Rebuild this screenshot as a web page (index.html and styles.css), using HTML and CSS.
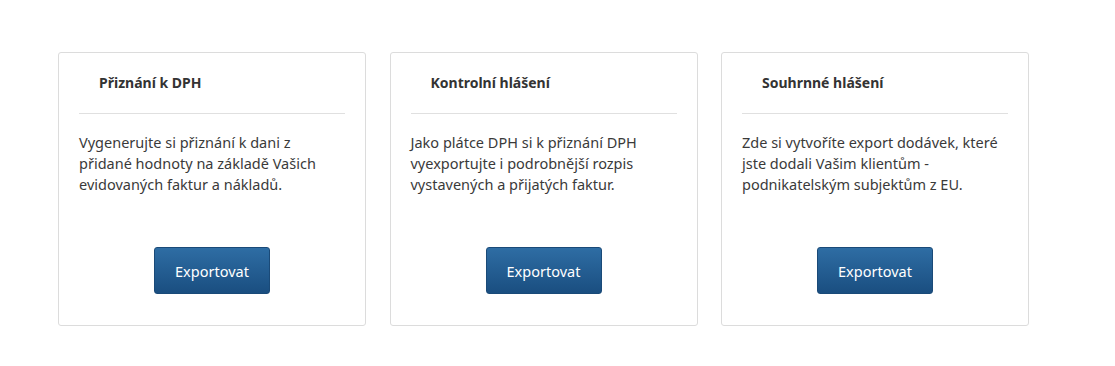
FILE: index.html
```html
<!DOCTYPE html>
<html lang="cs">
<head>
    <meta charset="UTF-8">
    <meta name="viewport" content="width=device-width, initial-scale=1.0">
    <title>Exporty DPH</title>
    <link rel="stylesheet" href="styles.css">
</head>
<body>
    <div class="container">
        <div class="card">
            <h2 class="card-title">Přiznání k DPH</h2>
            <p class="card-text">Vygenerujte si přiznání k dani z přidané hodnoty na základě Vašich evidovaných faktur a nákladů.</p>
            <div class="card-actions">
                <button class="btn">Exportovat</button>
            </div>
        </div>

        <div class="card">
            <h2 class="card-title">Kontrolní hlášení</h2>
            <p class="card-text">Jako plátce DPH si k přiznání DPH vyexportujte i podrobnější rozpis vystavených a přijatých faktur.</p>
            <div class="card-actions">
                <button class="btn">Exportovat</button>
            </div>
        </div>

        <div class="card">
            <h2 class="card-title">Souhrnné hlášení</h2>
            <p class="card-text">Zde si vytvoříte export dodávek, které jste dodali Vašim klientům - podnikatelským subjektům z EU.</p>
            <div class="card-actions">
                <button class="btn">Exportovat</button>
            </div>
        </div>
    </div>
</body>
</html>
```

FILE: styles.css
```css
* {
    margin: 0;
    padding: 0;
    box-sizing: border-box;
}

body {
    font-family: 'Noto Sans', 'Open Sans', sans-serif;
    background: #fff;
    color: #333;
}

.container {
    display: flex;
    gap: 23.5px;
    padding: 52px 0 0 58px;
}

.card {
    width: 308px;
    height: 274px;
    border: 1px solid #dcdcdc;
    border-radius: 3px;
    padding: 0 20px;
    display: flex;
    flex-direction: column;
}

.card-title {
    font-size: 14px;
    font-weight: bold;
    color: #333;
    padding: 20px 0 0 20px;
    height: 61px;
    border-bottom: 1px solid #e0e0e0;
}

.card-text {
    font-size: 14.5px;
    line-height: 21px;
    color: #3a3a3a;
    margin-top: 18px;
}

.card-actions {
    margin-top: auto;
    margin-bottom: 31px;
    text-align: center;
}

.btn {
    width: 116px;
    height: 47px;
    font-family: 'Noto Sans', 'Open Sans', sans-serif;
    font-size: 14.5px;
    color: #fff;
    background: linear-gradient(to bottom, #2e6da4, #1a4e80);
    border: 1px solid #1a4a78;
    border-radius: 3px;
    cursor: pointer;
}
```
